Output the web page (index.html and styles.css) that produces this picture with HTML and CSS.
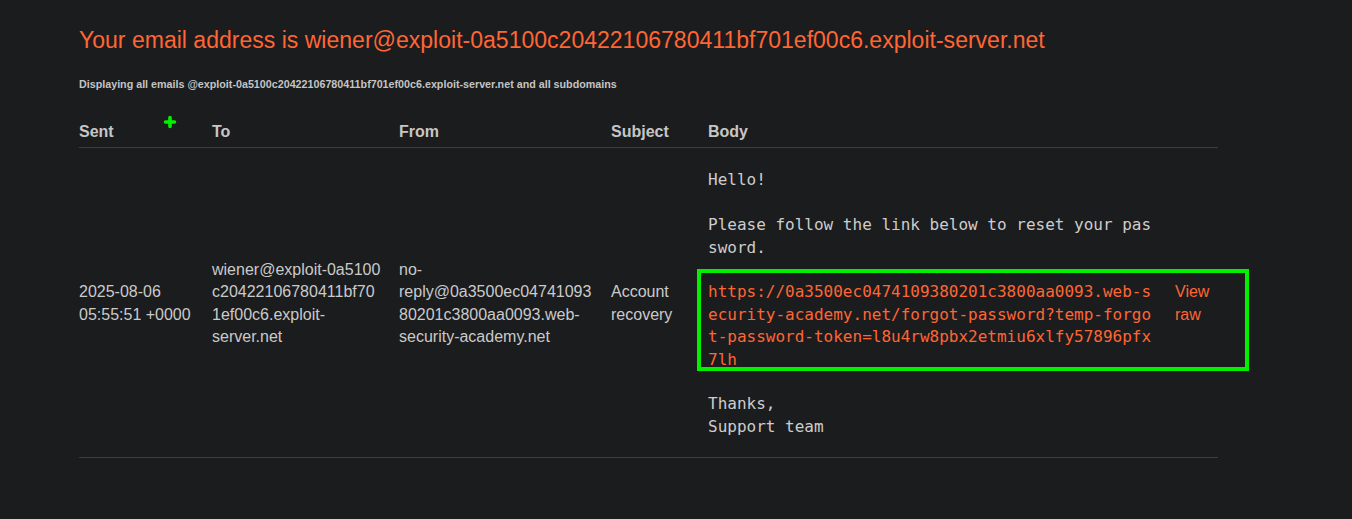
FILE: index.html
```html
<!DOCTYPE html>
<html>
<head>
<meta charset="utf-8">
<link rel="stylesheet" href="styles.css">
</head>
<body>
<div class="page">
  <h1 class="title">Your email address is wiener@exploit-0a5100c20422106780411bf701ef00c6.exploit-server.net</h1>
  <p class="sub">Displaying all emails @exploit-0a5100c20422106780411bf701ef00c6.exploit-server.net and all subdomains</p>
  <table class="mails">
    <colgroup>
      <col class="c-sent"><col class="c-to"><col class="c-from"><col class="c-subj"><col class="c-body"><col class="c-raw">
    </colgroup>
    <thead>
      <tr><th>Sent</th><th>To</th><th>From</th><th>Subject</th><th>Body</th><th></th></tr>
    </thead>
    <tbody>
      <tr>
        <td>2025-08-06 05:55:51 +0000</td>
        <td>wiener@exploit-&#8288;0a5100c20422106780411bf701ef00c6.exploit-server.net</td>
        <td>no-reply@0a3500ec0474109380201c3800aa0093.web-security-academy.net</td>
        <td>Account recovery</td>
        <td><pre class="body">Hello!

Please follow the link below to reset your password.

<a class="link" href="#">https://0a3500ec0474109380201c3800aa0093.web-security-academy.net/forgot-password?temp-forgot-password-token=l8u4rw8pbx2etmiu6xlfy57896pfx7lh</a>

Thanks,
Support team</pre></td>
        <td><a class="link" href="#">View raw</a></td>
      </tr>
    </tbody>
  </table>
</div>
<div class="mark-plus">
  <svg width="14" height="14" viewBox="0 0 14 14"><path d="M7 2.5V11.5M2.5 7H11.5" stroke="#00f000" stroke-width="3.6" stroke-linecap="round"/></svg>
</div>
<div class="mark-box"></div>
</body>
</html>
```
FILE: styles.css
```css
html, body {
  margin: 0;
  padding: 0;
  background: #1b1c1e;
}
body {
  position: relative;
  font-family: "Liberation Sans", Arial, sans-serif;
  color: #c9c9c9;
  min-height: 519px;
}
.page {
  padding: 25px 0 0 79px;
  width: 1139px;
}
.title {
  margin: 0;
  font-size: 23.04px;
  line-height: 30px;
  font-weight: normal;
  color: #ff6633;
  white-space: nowrap;
}
.sub {
  margin: 22px 0 0;
  font-size: 10.72px;
  line-height: 14px;
  font-weight: bold;
  color: #c4c4c4;
}
.mails {
  margin-top: 30px;
  width: 1139px;
  table-layout: fixed;
  border-collapse: collapse;
  font-size: 16px;
  line-height: 1.4;
}
.c-sent { width: 133px; }
.c-to { width: 187px; }
.c-from { width: 212px; }
.c-subj { width: 97px; }
.c-body { width: 467px; }
.c-raw { width: 43px; }
.mails th {
  text-align: left;
  font-weight: bold;
  color: #c6c6c6;
  padding: 0 18px 4px 0;
  border-bottom: 1px solid #3c3d40;
}
.mails td {
  vertical-align: middle;
  padding: 21px 18px 19px 0;
  border-bottom: 1px solid #3c3d40;
  overflow-wrap: break-word;
  color: #cacaca;
}
.mails td:last-child, .mails th:last-child {
  padding-right: 0;
}
.body {
  margin: 0;
  font-family: "DejaVu Sans Mono", monospace;
  font-size: 16px;
  line-height: 22.4px;
  white-space: pre-wrap;
  word-break: break-all;
  color: #cdcdcd;
}
.link {
  color: #ff6633;
  text-decoration: none;
}
.mark-plus {
  position: absolute;
  left: 163px;
  top: 115px;
  width: 14px;
  height: 14px;
  line-height: 0;
}
.mark-box {
  position: absolute;
  left: 697px;
  top: 269px;
  width: 544px;
  height: 94px;
  border: 4px solid #00f000;
}
```
